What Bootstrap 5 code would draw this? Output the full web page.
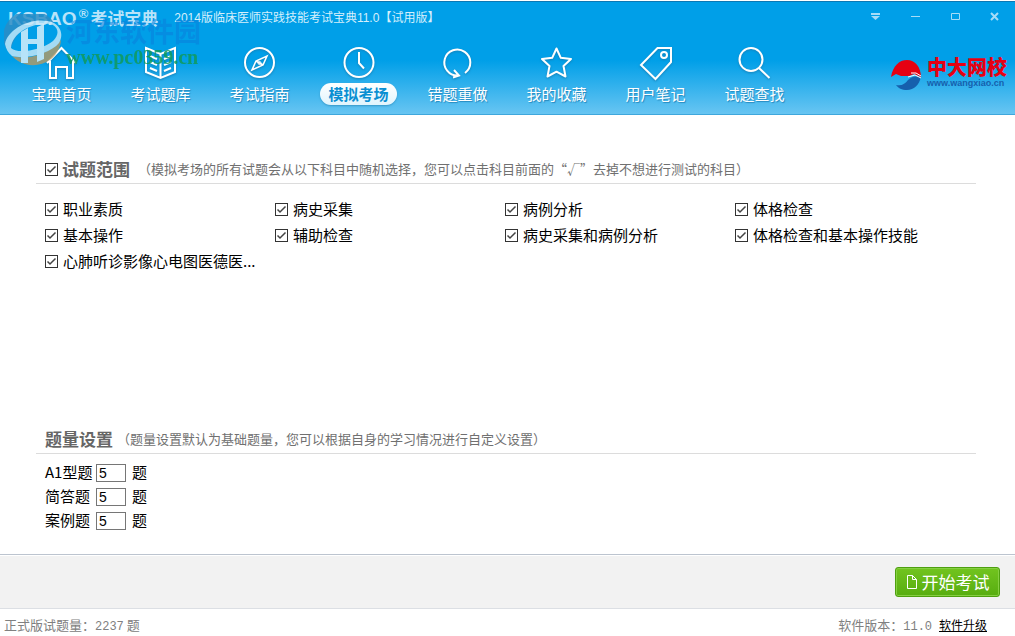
<!DOCTYPE html>
<html lang="zh-CN">
<head>
<meta charset="utf-8">
<meta name="viewport" content="width=device-width, initial-scale=1">
<title>考试宝典</title>
<link href="https://cdn.jsdelivr.net/npm/bootstrap@5.3.0/dist/css/bootstrap.min.css" rel="stylesheet">
<style>
body{font-family:"Noto Sans CJK SC",sans-serif;font-size:15px;line-height:20px;color:#000;background:#fff}
.app-header{background:linear-gradient(#009fe8 0,#009fe8 52%,#68c5f2 100%);border-top:1px solid #0b78b4;border-bottom:1px solid #3fa7dc;margin-top:1px}
.title-bar{height:32px;padding:0 0 0 8px}
.brand{font-size:17px;font-weight:700;color:#b8e3f9}
.brand-latin{font-family:"Liberation Sans",sans-serif;font-size:19px}
.brand sup{font-family:"Liberation Sans",sans-serif;font-size:13px;top:-7px;margin:0 2px}
.app-title{font-family:"Liberation Sans","Noto Sans CJK SC",sans-serif;font-size:12px;color:#d5effc}
.win-btn{width:40px;height:24px;color:#a6dcf7;line-height:16px}
.main-nav{padding:0 0 9px 12px}
.main-nav .nav-link{width:99px;color:#fff;padding:9px 0 0;text-shadow:1px 1px 1px #2488bd}
.main-nav svg{width:40px;height:40px;fill:none;stroke:#fff;stroke-width:2;filter:drop-shadow(0 1px 1px #1581b8)}
.nav-text{line-height:22px;padding:0 8px;border-radius:11px}
.active .nav-text{background:linear-gradient(#fff,#e0f4fd);color:#0a8fd2;font-weight:700;text-shadow:none;box-shadow:0 1px 2px #3798c8}
.school{margin-right:8px;color:#e60012;text-decoration:none}
.school-name{font-size:20px;font-weight:900;line-height:18px}
.school-url{font-family:"Liberation Sans",sans-serif;font-size:9px;font-weight:700;line-height:14px;color:#1660ad}
.watermark{left:4px;top:12px;pointer-events:none}
.wm-text{padding-top:2px}
.wm-name{font-size:27px;font-weight:700;line-height:30px;color:#0a7fdc;opacity:.55}
.wm-url{font-family:"Liberation Serif",serif;font-size:20px;font-weight:700;line-height:22px;color:#119a5c;opacity:.85}
.content{padding:43px 39px 0 36px}
.section-head{padding:0 9px 3px;border-bottom:1px solid #dcdcdc;color:#666}
.section-head h2,.section-head .head-label{font-size:17px;font-weight:700;line-height:22px;margin:0}
.hint{font-size:13px;color:#707070}
.subjects{padding:12px 11px 0 9px;min-height:244px}
.tick{appearance:none;flex:none;width:13px;height:13px;margin:0;border:1px solid #333;background:#fff url("data:image/svg+xml,%3Csvg xmlns='http://www.w3.org/2000/svg' viewBox='0 0 11 11'%3E%3Cpath d='M1.5 5.5 4 8 9.5 2.5' fill='none' stroke='%23444' stroke-width='1.5'/%3E%3C/svg%3E")}
.tick:not(:checked){background-image:none}
.subject{height:26px;gap:5px}
.quantities{padding:7px 9px 0}
.quantity{height:24px}
.quantity label{width:51px;line-height:24px;padding-bottom:2px}
.quantity span{padding:0 0 2px 6px}
.quantity input{width:30px;height:18px;padding:0 2px;border:1px solid #767676;font-family:"Liberation Sans",sans-serif;font-size:14px;line-height:16px}
.action-bar{border-top:1px solid #bcc4cf;border-bottom:1px solid #dcdfe4;background:#f2f2f2;box-shadow:inset 0 1px #fff;padding:12px 15px 11px}
.start-btn{width:105px;height:30px;padding:0;font-size:17px;line-height:26px;color:#fff;border:1px solid #4ea00f;border-radius:3px;background:linear-gradient(#72c41f,#57ad10);box-shadow:inset 0 0 0 1px #86cf42}
.start-btn:hover{color:#fff;background:#57ad10}
.status{height:27px;padding:6px 28px 0 4px;font-size:13px;color:#808080}
.digits{font-family:"Liberation Mono",monospace;font-size:12px}
.status a{font-size:12px;color:#000}
</style>
</head>
<body class="d-flex flex-column min-vh-100">
<header class="app-header position-relative">
  <div class="title-bar d-flex align-items-center">
    <div class="brand"><span class="brand-latin">KSBAO</span><sup>®</sup>考试宝典</div>
    <div class="app-title ms-3 me-auto">2014版临床医师实践技能考试宝典11.0【试用版】</div>
    <div class="d-flex align-self-start">
      <button class="win-btn btn p-0 border-0" aria-label="菜单"><svg width="12" height="10" fill="currentColor"><path d="M2 1h9v2H2zM2 4h9L6.500 8z"/></svg></button>
      <button class="win-btn btn p-0 border-0" aria-label="最小化"><svg width="12" height="10" fill="currentColor"><path d="M2 4h9v1H2z"/></svg></button>
      <button class="win-btn btn p-0 border-0" aria-label="最大化"><svg width="12" height="10" fill="none" stroke="currentColor"><path d="M2.500 1.500h8v6h-8z"/></svg></button>
      <button class="win-btn btn p-0 border-0" aria-label="关闭"><svg width="12" height="10" fill="none" stroke="currentColor" stroke-width="2"><path d="m2 1 7 7M9 1 2 8"/></svg></button>
    </div>
  </div>
  <div class="d-flex align-items-center">
    <nav class="main-nav nav flex-nowrap text-center me-auto">
      <a class="nav-link d-flex flex-column align-items-center" href="#"><svg viewBox="0 0 40 40"><path d="M5 20 19.500 5 34 20M8 18v17h6V24h11v11h6V18"/></svg><span class="nav-text">宝典首页</span></a>
      <a class="nav-link d-flex flex-column align-items-center" href="#"><svg viewBox="0 0 40 40"><path d="m5 5 14.500 6L34 5v24l-14.500 6L5 29zM19.500 11v24M9 13l7 3M9 19l7 3M9 25l7 3M30 13l-7 3M30 19l-7 3M30 25l-7 3"/></svg><span class="nav-text">考试题库</span></a>
      <a class="nav-link d-flex flex-column align-items-center" href="#"><svg viewBox="0 0 40 40"><circle cx="19.500" cy="19.500" r="14.500"/><path d="m27 13-4 9-11 5 4-9zM16 18l7 4" stroke-width="1.600"/><circle cx="19.500" cy="20" r="1.500" stroke-width="1"/></svg><span class="nav-text">考试指南</span></a>
      <a class="nav-link active d-flex flex-column align-items-center" href="#" aria-current="page"><svg viewBox="0 0 40 40"><circle cx="20" cy="19.500" r="14.500"/><path d="M20 9v11l5 5.500"/></svg><span class="nav-text">模拟考场</span></a>
      <a class="nav-link d-flex flex-column align-items-center" href="#"><svg viewBox="0 0 40 40"><path d="M27 30A13 13 0 1 0 20 32.500M16 27l5 5.500-6 2"/></svg><span class="nav-text">错题重做</span></a>
      <a class="nav-link d-flex flex-column align-items-center" href="#"><svg viewBox="0 0 40 40"><path stroke-linejoin="round" d="m19.500 5.500 4.300 9.300 10.200 1.200-7.500 7 2 10.500-9-4.800-9 4.800 2-10.500-7.500-7 10.200-1.200z"/></svg><span class="nav-text">我的收藏</span></a>
      <a class="nav-link d-flex flex-column align-items-center" href="#"><svg viewBox="0 0 40 40"><path d="M21.500 5H35v14L19.500 36 5 22z"/><circle cx="28" cy="12" r="3"/></svg><span class="nav-text">用户笔记</span></a>
      <a class="nav-link d-flex flex-column align-items-center" href="#"><svg viewBox="0 0 40 40"><circle cx="16" cy="16.500" r="11.500"/><path d="m24 25 10.500 10"/></svg><span class="nav-text">试题查找</span></a>
    </nav>
    <a class="school d-flex align-items-center" href="#">
      <svg width="32" height="34" viewBox="0 0 32 34"><path fill="#e60012" d="M0 20C2 9 8 3 16 3s14 7 14 17l-7-3-5 2-8 0-5-2z"/><path fill="#1660ad" d="M5 28c6 1 9-1 12-5 4-4 8-4 13-3-2 8-7 13-14 13-5 0-9-2-11-5z"/><path fill="none" stroke="#fff" d="m17 20 7-2 6 3M20 16l5 0 5 3"/></svg>
      <span class="d-flex flex-column ms-1"><span class="school-name">中大网校</span><span class="school-url">www.wangxiao.cn</span></span>
    </a>
  </div>
  <div class="watermark position-absolute d-flex" aria-hidden="true">
    <svg width="58" height="54" viewBox="0 0 58 54" opacity=".82">
      <path fill="#2c8cc4" d="M3 36A27 26 0 0 1 50 9c-14-4-40 5-43 27z"/>
      <path fill="#b39a66" d="M8 42C22 46 42 42 57 26A28 27 0 0 1 8 42z"/>
      <path fill="#c9e9f8" d="M1 30C4 14 30 1 50 9c8 5 9 13 5 20-8 10-32 17-47 13-4-3-6-7-7-12zm6 4c5 6 30 3 42-7 6-6 6-12 0-16C36 6 8 16 7 34z"/>
      <path fill="#dff3fc" d="m17 18 7-4v25h-7zM33 13l7-3v35l-7 3zM24 25h9v5h-9zM17 39h7v10h-7z"/>
    </svg>
    <div class="wm-text ms-1"><div class="wm-name">河东软件园</div><div class="wm-url">www.pc0359.cn</div></div>
  </div>
</header>
<main class="content flex-grow-1">
  <section>
    <div class="section-head d-flex align-items-center">
      <input class="tick" type="checkbox" id="all" checked><label class="head-label ps-1" for="all">试题范围</label>
      <span class="hint ms-2">（模拟考场的所有试题会从以下科目中随机选择，您可以点击科目前面的“√”去掉不想进行测试的科目）</span>
    </div>
    <div class="subjects">
      <div class="row g-0">
        <div class="col-3 subject d-flex align-items-center"><input class="tick" type="checkbox" id="s1" checked><label for="s1">职业素质</label></div>
        <div class="col-3 subject d-flex align-items-center"><input class="tick" type="checkbox" id="s2" checked><label for="s2">病史采集</label></div>
        <div class="col-3 subject d-flex align-items-center"><input class="tick" type="checkbox" id="s3" checked><label for="s3">病例分析</label></div>
        <div class="col-3 subject d-flex align-items-center"><input class="tick" type="checkbox" id="s4" checked><label for="s4">体格检查</label></div>
        <div class="col-3 subject d-flex align-items-center"><input class="tick" type="checkbox" id="s5" checked><label for="s5">基本操作</label></div>
        <div class="col-3 subject d-flex align-items-center"><input class="tick" type="checkbox" id="s6" checked><label for="s6">辅助检查</label></div>
        <div class="col-3 subject d-flex align-items-center"><input class="tick" type="checkbox" id="s7" checked><label for="s7">病史采集和病例分析</label></div>
        <div class="col-3 subject d-flex align-items-center"><input class="tick" type="checkbox" id="s8" checked><label for="s8">体格检查和基本操作技能</label></div>
        <div class="col-3 subject d-flex align-items-center"><input class="tick" type="checkbox" id="s9" checked><label for="s9">心肺听诊影像心电图医德医...</label></div>
      </div>
    </div>
  </section>
  <section>
    <div class="section-head d-flex align-items-center"><h2>题量设置</h2><span class="hint ms-1">（题量设置默认为基础题量，您可以根据自身的学习情况进行自定义设置）</span></div>
    <div class="quantities">
      <div class="quantity d-flex align-items-center"><label for="q1">A1型题</label><input id="q1" type="text" value="5"><span>题</span></div>
      <div class="quantity d-flex align-items-center"><label for="q2">简答题</label><input id="q2" type="text" value="5"><span>题</span></div>
      <div class="quantity d-flex align-items-center"><label for="q3">案例题</label><input id="q3" type="text" value="5"><span>题</span></div>
    </div>
  </section>
</main>
<div class="action-bar d-flex justify-content-end">
  <button class="start-btn btn d-flex align-items-center justify-content-center gap-1" type="button"><svg width="12" height="14" fill="none" stroke="#fff"><path d="M1.500.5h5l4 4v9h-9zM6.500.5v4h4"/></svg>开始考试</button>
</div>
<footer class="status d-flex justify-content-between">
  <div>正式版试题量：<span class="digits">2237</span> 题</div>
  <div>软件版本：<span class="digits">11.0</span> <a class="ms-1" href="#">软件升级</a></div>
</footer>
<script src="https://cdn.jsdelivr.net/npm/bootstrap@5.3.0/dist/js/bootstrap.bundle.min.js"></script>
</body>
</html>
